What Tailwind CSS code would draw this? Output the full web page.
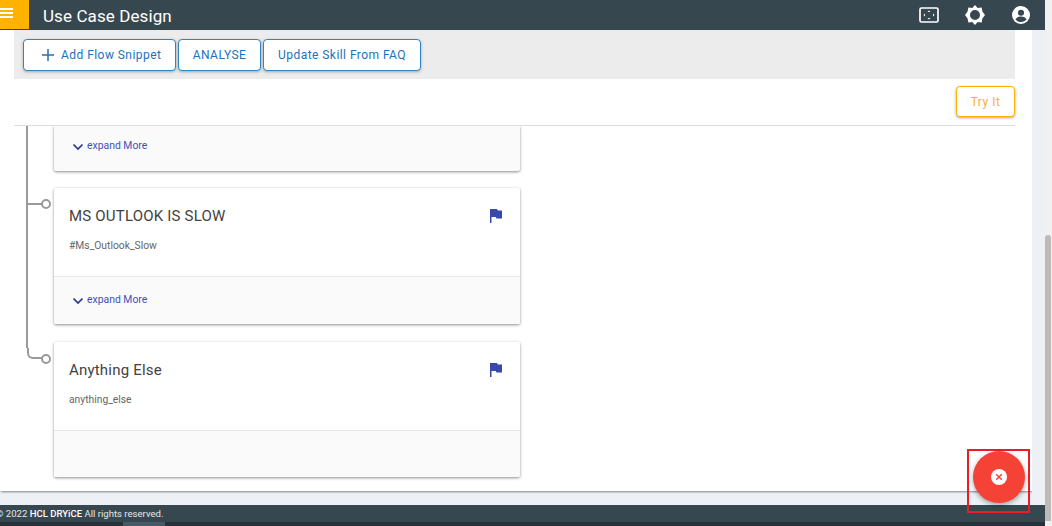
<!DOCTYPE html>
<html>
<head>
<meta charset="utf-8">
<script src="https://cdn.jsdelivr.net/npm/@tailwindcss/browser@4"></script>
</head>
<body class="m-0 overflow-hidden bg-[#f1f1f1] font-['Roboto',sans-serif]">
<div class="relative w-[1052px] h-[526px] overflow-hidden flex flex-col">
  <header class="h-[30px] w-[1045px] shrink-0 bg-[#37474f] flex items-center text-white pr-[15px]">
    <div class="w-[29px] h-[29px] self-start bg-[#ffb300] flex items-start justify-start pt-[8px]">
      <div class="w-[13px] flex flex-col gap-[2px]">
        <div class="h-[2px] bg-white"></div><div class="h-[2px] bg-white"></div><div class="h-[2px] bg-white"></div>
      </div>
    </div>
    <div class="ml-[14px] text-[17px] leading-[30px] tracking-[0.1px] pt-[1px]">Use Case Design</div>
    <div class="ml-auto flex items-center">
      <svg class="w-[20px] h-[16px]" viewBox="0 0 20 16" fill="none"><rect x="1" y="1" width="18" height="14" rx="1.500" stroke="#fff" stroke-width="1.700"/><path d="M10 3.500l1.500 1.500h-3zM10 12.500l1.500-1.500h-3zM4.500 8L6 6.500v3zM15.500 8L14 6.500v3z" fill="#fff"/></svg>
      <svg class="ml-[26px] w-[20px] h-[20px]" viewBox="0 0 24 24"><path fill="#fff" fill-rule="evenodd" d="M12 0l3.200 3.600 4.800-.5.900 4.700L24 12l-3.100 4.200-.9 4.700-4.800-.5L12 24l-3.200-3.600-4.800.5-.9-4.700L0 12l3.100-4.200.9-4.700 4.800.5zM12 6a6 6 0 1 0 0 12 6 6 0 0 0 0-12z"/></svg>
      <svg class="ml-[27px] w-[18px] h-[18px]" viewBox="0 0 20 20"><circle cx="10" cy="10" r="10" fill="#fff"/><circle cx="10" cy="7.500" r="3.400" fill="#37474f"/><path d="M3.800 14.800c1.500-2.200 3.800-3 6.200-3s4.700.8 6.200 3c-1.500 2-3.700 3-6.200 3s-4.700-1-6.200-3z" fill="#37474f"/></svg>
    </div>
  </header>

  <div class="flex flex-1 min-h-0">
    <main class="w-[1032px] flex flex-col h-[461px] bg-white shadow-[1px_1px_2px_rgba(0,0,0,0.45)] pl-[14px] pr-[17px]">
      <div class="h-[49px] shrink-0 bg-[#ececec] flex items-start pt-[9px] pl-[9px] gap-[2px]">
        <button class="h-[32px] w-[153px] bg-white border border-[#2f86c5] rounded-[4px] shadow-[0_1px_3px_rgba(0,0,0,0.3)] flex items-center text-[#1a73ba] text-[12px] tracking-[0.45px] pl-[18px]">
          <svg class="w-[12px] h-[12px] mr-[7px]" viewBox="0 0 12 12"><path d="M6 0v12M0 6h12" stroke="#2a6fb0" stroke-width="1.500"/></svg>Add Flow Snippet
        </button>
        <button class="h-[32px] w-[83px] bg-white border border-[#2f86c5] rounded-[4px] shadow-[0_1px_3px_rgba(0,0,0,0.3)] text-[#1a73ba] text-[12px] tracking-[0.45px]">ANALYSE</button>
        <button class="h-[32px] w-[158px] bg-white border border-[#2f86c5] rounded-[4px] shadow-[0_1px_3px_rgba(0,0,0,0.3)] text-[#1a73ba] text-[12px] tracking-[0.45px]">Update Skill From FAQ</button>
      </div>
      <div class="h-[47px] shrink-0 border-b border-[#dcdcdc] flex justify-end items-start pt-[7px]">
        <button class="w-[59px] h-[31px] bg-white border border-[#ffb300] rounded-[4px] shadow-[0_1px_3px_rgba(0,0,0,0.35)] text-[#fbab3c] text-[12px] tracking-[0.5px]">Try It</button>
      </div>
      <div class="relative flex-1 min-h-0 overflow-hidden pl-[40px]">
        <div class="absolute left-[12px] top-0 w-[2px] h-[222px] bg-[#9a9a9a]"></div>
        <div class="w-[466px] h-[45px] bg-[#fafafa] rounded-b-[2px] shadow-[0_1px_3px_rgba(0,0,0,0.45)] flex items-start pt-[13px] pl-[18px]">
          <svg class="w-[12px] h-[8px] mr-[3px] mt-[4px]" viewBox="0 0 12 8" fill="none"><path d="M1.500 1.500L6 6l4.500-4.500" stroke="#283593" stroke-width="1.700"/></svg>
          <span class="text-[10.4px] leading-[13px] text-[#3f51b5]">expand More</span>
        </div>

        <article class="relative mt-[17px] w-[466px] h-[136px] bg-white rounded-[2px] shadow-[0_1px_3px_rgba(0,0,0,0.45)]">
          <div class="absolute -left-[27px] top-[15px] w-[15px] h-[2px] bg-[#9a9a9a]"></div>
          <div class="absolute -left-[13px] top-[11px] w-[10px] h-[10px] rounded-full border-2 border-[#9a9a9a] bg-white"></div>
          <div class="h-[88px] relative pl-[15px] pt-[18px]">
            <div class="text-[#424242] text-[15px] leading-[21px] tracking-[0.2px]">MS OUTLOOK IS SLOW</div>
            <div class="mt-[12px] text-[#666] text-[10.3px] leading-[14px]">#Ms_Outlook_Slow</div>
            <svg class="absolute right-[18px] top-[21px] w-[12px] h-[14px]" viewBox="0 0 12 14"><path d="M0 0h7l.8 1.500H12v8H6.500l-.8-1.500H1.500v6H0z" fill="#3949ab"/></svg>
          </div>
          <div class="h-[48px] bg-[#fafafa] border-t border-[#e8e8e8] flex items-start pt-[16px] pl-[18px] rounded-b-[2px]">
            <svg class="w-[12px] h-[8px] mr-[3px] mt-[4px]" viewBox="0 0 12 8" fill="none"><path d="M1.500 1.500L6 6l4.500-4.500" stroke="#283593" stroke-width="1.700"/></svg>
            <span class="text-[10.4px] leading-[13px] text-[#3f51b5]">expand More</span>
          </div>
        </article>

        <article class="relative mt-[18px] w-[466px] h-[135px] bg-white rounded-[2px] shadow-[0_1px_3px_rgba(0,0,0,0.45)]">
          <div class="absolute -left-[27px] top-[6px] w-[15px] h-[11px] border-l-2 border-b-2 border-[#9a9a9a] rounded-bl-[6px]"></div>
          <div class="absolute -left-[13px] top-[12px] w-[10px] h-[10px] rounded-full border-2 border-[#9a9a9a] bg-white"></div>
          <div class="h-[88px] relative pl-[15px] pt-[18px]">
            <div class="text-[#424242] text-[15px] leading-[21px] tracking-[0.2px]">Anything Else</div>
            <div class="mt-[12px] text-[#666] text-[10.3px] leading-[14px]">anything_else</div>
            <svg class="absolute right-[18px] top-[21px] w-[12px] h-[14px]" viewBox="0 0 12 14"><path d="M0 0h7l.8 1.500H12v8H6.500l-.8-1.500H1.500v6H0z" fill="#3949ab"/></svg>
          </div>
          <div class="h-[47px] bg-[#fafafa] border-t border-[#e8e8e8] rounded-b-[2px]"></div>
        </article>
      </div>
    </main>
    <div class="w-[13px] h-[475px] bg-[#edf1f5]"></div>
    <div class="relative w-[7px] bg-[#f1f1f1]">
      <div class="absolute left-0 top-[205px] w-[6px] h-[286px] rounded-t-[3px] bg-[#bdbab8]"></div>
    </div>
  </div>

  <div class="absolute left-0 top-[491px] w-[1045px] h-[14px] bg-[#edf1f5] -z-10"></div>
  <footer class="absolute left-0 top-[505px] w-[1045px] h-[17px] bg-[#37474f] text-white text-[9.55px] leading-[18px]">
    <span class="-ml-[4px] inline-block text-[#e4e8ea]">© 2022 <span class="text-white font-medium">HCL DRYiCE</span> All rights reserved.</span>
  </footer>
  <div class="absolute left-0 top-[522px] w-[1045px] h-[4px] bg-[#263238]">
    <div class="absolute left-[123px] top-0 w-[42px] h-[4px] bg-[#455a64]"></div>
  </div>

  <button class="absolute left-[973px] top-[451px] w-[52px] h-[52px] rounded-full bg-[#f44336] shadow-[0_2px_5px_rgba(0,0,0,0.35)] flex items-center justify-center">
    <svg class="w-[16px] h-[16px]" viewBox="0 0 16 16"><circle cx="8" cy="8" r="8" fill="#fff"/><path d="M5.200 5.200l5.600 5.600M10.800 5.200l-5.600 5.600" stroke="#f44336" stroke-width="1.500"/></svg>
  </button>
  <div class="absolute left-[967px] top-[449px] w-[63px] h-[64px] border-[2.5px] border-[#ed1c24] pointer-events-none"></div>
</div>
</body>
</html>
